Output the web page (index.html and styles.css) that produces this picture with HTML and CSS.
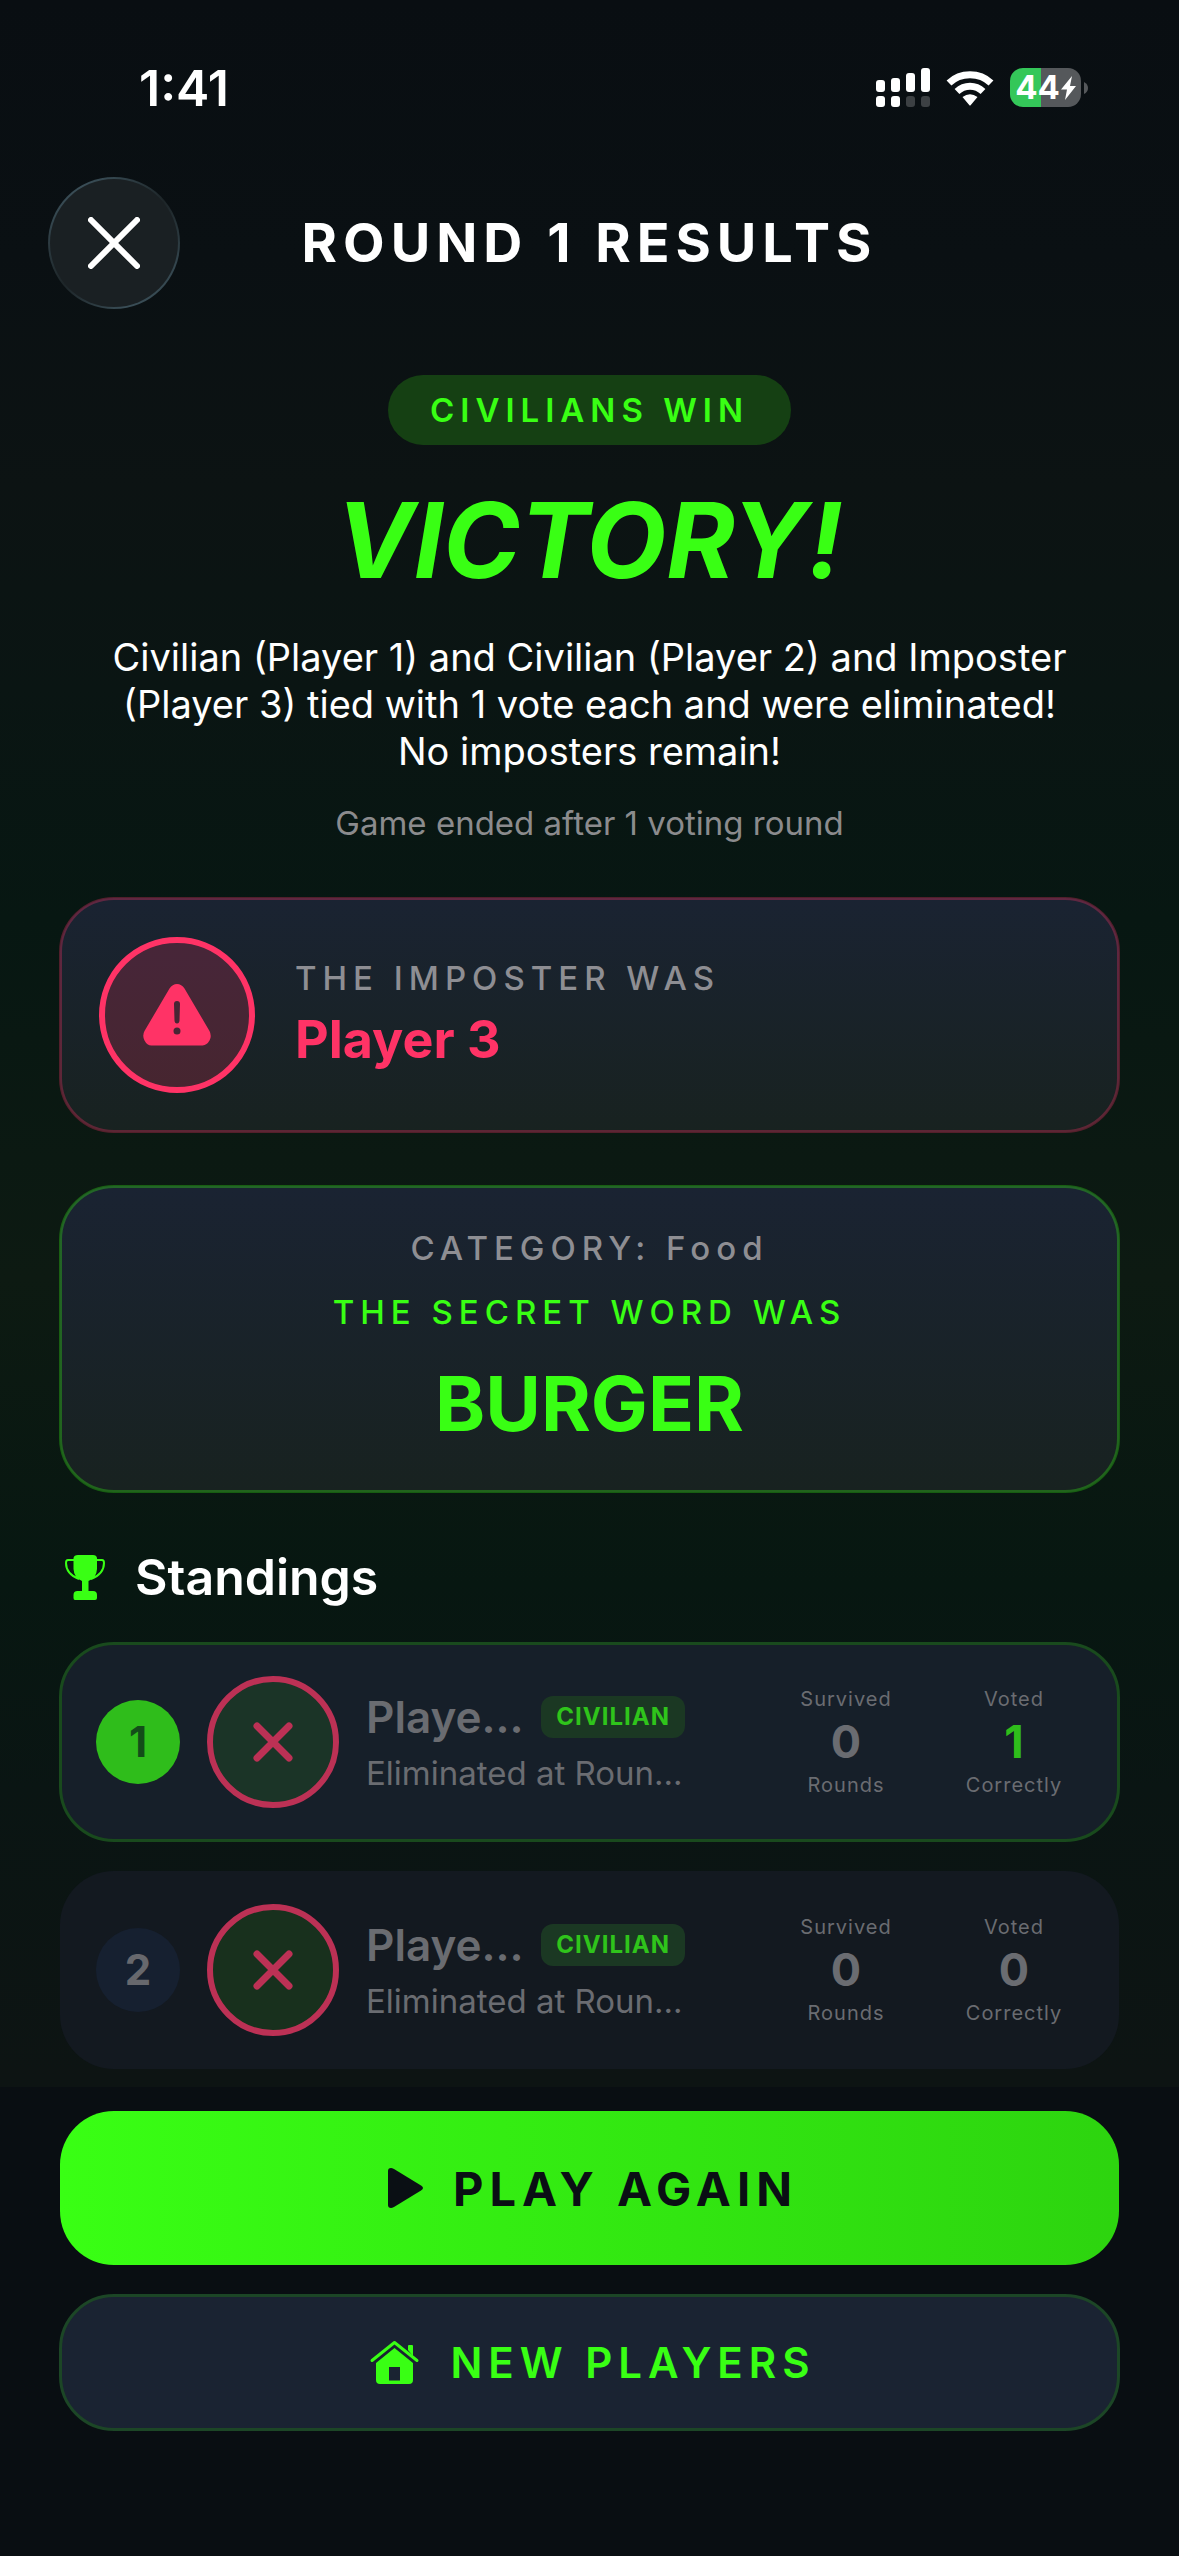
FILE: index.html
```html
<!DOCTYPE html>
<html lang="en">
<head>
<meta charset="utf-8">
<meta name="viewport" content="width=device-width, initial-scale=1">
<title>Round 1 Results</title>
<link rel="stylesheet" href="styles.css">
</head>
<body>
<div class="screen">
  <div class="status">
    <time class="status-time">1:41</time>
    <div class="status-icons">
      <svg class="icon-signal" viewBox="0 0 54 39" aria-hidden="true">
        <g fill="#fff"><rect x="0" y="12" width="9" height="12" rx="3"/><rect x="15" y="10" width="9" height="14" rx="3"/><rect x="30" y="5" width="9" height="19" rx="3"/><rect x="45" y="0" width="9" height="24" rx="3"/><rect x="0" y="28" width="9" height="11" rx="3"/><rect x="15" y="28" width="9" height="11" rx="3"/></g>
        <g fill="#3c4043"><rect x="30" y="28" width="9" height="11" rx="3"/><rect x="45" y="28" width="9" height="11" rx="3"/></g>
      </svg>
      <svg class="icon-wifi" viewBox="0 0 48 36" aria-hidden="true">
        <g fill="none" stroke="#fff" stroke-width="7"><path d="M3 13C14.500 2 33.500 2 45 13"/><path d="M11 21.500C18.500 14.500 29.500 14.500 37 21.500"/></g>
        <path fill="#fff" d="M16.500 27Q24 21.500 31.500 27L24.800 35Q24 36 23.200 35Z"/>
      </svg>
      <div class="battery">
        <div class="battery-body"><span class="battery-level">44</span><svg class="icon-bolt" viewBox="0 0 15 24" aria-hidden="true"><path fill="#fff" d="M11 0L0 13.500H6L4 24L15 10H9Z"/></svg></div>
        <svg class="icon-nub" viewBox="0 0 4 12" aria-hidden="true"><path fill="#55585b" d="M0 0Q4 2 4 6T0 12Z"/></svg>
      </div>
    </div>
  </div>

  <header class="header">
    <button class="close" type="button" aria-label="Close">
      <svg class="icon-close" viewBox="0 0 52 52" aria-hidden="true"><path d="M3 3L49 49M49 3L3 49"/></svg>
    </button>
    <h1 class="title">ROUND 1 RESULTS</h1>
  </header>

  <main class="content">
    <section class="outcome">
      <p class="pill">CIVILIANS WIN</p>
      <h2 class="victory">VICTORY!</h2>
      <p class="summary">Civilian (Player 1) and Civilian (Player 2) and Imposter (Player 3) tied with 1 vote each and were eliminated! No imposters remain!</p>
      <p class="note">Game ended after 1 voting round</p>
    </section>

    <section class="card card-imposter">
      <div class="alert">
        <svg class="icon-alert" viewBox="0 0 68 62" aria-hidden="true"><path fill="#ff3366" fill-rule="evenodd" d="M26.500 4.500Q29.500 0 34 0T41.500 4.500L66.500 47Q69 52 66.500 56.500T59.500 61.500H8.500Q4 61.500 1.500 56.500T1.500 47ZM31 20L31.500 36.500Q31.700 39.500 34 39.500T36.500 36.500L37 20Q37 17 34 17T31 20ZM34 43.500A3.500 3.500 0 1 0 34 50.500A3.500 3.500 0 1 0 34 43.500Z"/></svg>
      </div>
      <div>
        <p class="label">THE IMPOSTER WAS</p>
        <p class="imposter-name">Player 3</p>
      </div>
    </section>

    <section class="card card-word">
      <p class="label">CATEGORY: Food</p>
      <p class="label label-green">THE SECRET WORD WAS</p>
      <p class="word">BURGER</p>
    </section>

    <section class="standings">
      <h2 class="standings-title">
        <svg class="icon-trophy" viewBox="0 0 40 45" aria-hidden="true"><path fill="#39ff14" d="M8.500 3Q9 0 13 0H28Q31.500 0 32 3V14Q31.500 23 23.500 26V36H28Q32 36 32 40V43Q32 45 30 45H10Q8.500 45 8.500 43V40Q8.500 36 12.500 36H17V26Q9 23 8.500 14Z"/><path fill="none" stroke="#39ff14" stroke-width="2" d="M9 5H3Q1 5 1 8Q1 19 14 24M31 5H37Q39 5 39 8Q39 19 26 24"/></svg>
        Standings
      </h2>
      <ol class="rows">
        <li class="row row-first">
          <span class="rank">1</span>
          <span class="avatar"><svg class="icon-out" viewBox="0 0 40 40" aria-hidden="true"><path d="M4 4L36 36M36 4L4 36"/></svg></span>
          <div class="info">
            <div class="name-line"><span class="name">Playe…</span><span class="badge">CIVILIAN</span></div>
            <p class="fate">Eliminated at Roun…</p>
          </div>
          <div class="stats">
            <div class="stat"><span>Survived</span><strong>0</strong><span>Rounds</span></div>
            <div class="stat stat-green"><span>Voted</span><strong>1</strong><span>Correctly</span></div>
          </div>
        </li>
        <li class="row">
          <span class="rank">2</span>
          <span class="avatar"><svg class="icon-out" viewBox="0 0 40 40" aria-hidden="true"><path d="M4 4L36 36M36 4L4 36"/></svg></span>
          <div class="info">
            <div class="name-line"><span class="name">Playe…</span><span class="badge">CIVILIAN</span></div>
            <p class="fate">Eliminated at Roun…</p>
          </div>
          <div class="stats">
            <div class="stat"><span>Survived</span><strong>0</strong><span>Rounds</span></div>
            <div class="stat"><span>Voted</span><strong>0</strong><span>Correctly</span></div>
          </div>
        </li>
      </ol>
    </section>
  </main>

  <footer class="footer">
    <button class="btn btn-play" type="button">
      <svg class="icon-play" viewBox="0 0 48 48" aria-hidden="true"><path fill="#0a0f14" d="M7 7Q7 4 10 4Q11 4 13 5L40 21.500Q44 24 40 26.500L13 43Q11 44 10 44Q7 44 7 41Z"/></svg>
      PLAY AGAIN
    </button>
    <button class="btn btn-new" type="button">
      <svg class="icon-home" viewBox="0 0 63 48" aria-hidden="true"><path fill="none" stroke="#39ff14" stroke-width="3" stroke-linecap="round" stroke-linejoin="round" d="M9 21.500L31.500 3.500L54 21.500"/><path fill="#39ff14" d="M45 11V7Q45 6 46 6H49Q50 6 50 7V17Z"/><path fill="#39ff14" fill-rule="evenodd" d="M31.500 9L50 24V41Q50 45 46 45H17Q13 45 13 41V24ZM26 28V41.500H37V28Z"/></svg>
      NEW PLAYERS
    </button>
  </footer>
</div>
</body>
</html>
```
FILE: styles.css
```css
:root {
  --green: #39ff14;
  --red: #ff3366;
  --grey: #8e8e93;
  --base: #0a0f14;
  --panel: #1a2332;
  --gutter: 60px;
}

* { box-sizing: border-box; }

body, h1, h2, p, ol { margin: 0; padding: 0; }

body {
  background: var(--base);
  color: #fff;
  font-family: Inter, "Liberation Sans", sans-serif;
}

.screen {
  min-height: 100vh;
  display: flex;
  flex-direction: column;
  background: linear-gradient(#090e12 0%, #0a1013 10%, #0c1313 19%, #0a1513 27%, #071712 36%, #0d1a12 50%, #071711 62%, #0a1513 70%, #0d1413 81%);
}

.status {
  height: 177px;
  padding: 60px 91px 0 139px;
  display: flex;
  justify-content: space-between;
  align-items: flex-start;
}

.status-time { font-size: 50px; line-height: 56px; font-weight: 600; }

.status-icons { display: flex; align-items: center; gap: 16px; padding-top: 8px; }
.icon-signal { width: 54px; height: 39px; }
.icon-wifi { width: 48px; height: 36px; }

.battery { display: flex; align-items: center; gap: 3px; }
.battery-body {
  width: 71px;
  height: 39px;
  border-radius: 13px;
  display: flex;
  align-items: center;
  justify-content: center;
  gap: 1px;
  background: linear-gradient(90deg, #34c759 44%, #55585b 44%);
}
.battery-level { font-size: 33px; line-height: 39px; font-weight: 700; }
.icon-bolt { width: 15px; height: 24px; }
.icon-nub { width: 4px; height: 12px; }

.header {
  display: grid;
  grid-template-columns: 132px 1fr 132px;
  align-items: center;
  padding: 0 48px;
}

.close {
  width: 132px;
  height: 132px;
  padding: 0;
  border: 2px solid transparent;
  border-radius: 50%;
  display: grid;
  place-items: center;
  background:
    linear-gradient(#1a2023, #1a2023) padding-box,
    conic-gradient(#34464e, #1d2528 50deg, #34464e 110deg, #3a4e57 170deg, #1d2528 230deg, #34464e 290deg, #3a4e57 330deg, #34464e) border-box;
}
.icon-close { width: 52px; height: 52px; fill: none; stroke: #fff; stroke-width: 6; stroke-linecap: round; }

.title {
  text-align: center;
  font-size: 54px;
  line-height: 64px;
  font-weight: 700;
  letter-spacing: 6px;
}

.content { padding: 66px var(--gutter) 18px; }

.outcome { display: flex; flex-direction: column; align-items: center; text-align: center; }

.pill {
  padding: 0 42px;
  border-radius: 35px;
  background: #154013;
  color: var(--green);
  font-size: 33px;
  line-height: 70px;
  font-weight: 600;
  letter-spacing: 6px;
}

.victory {
  margin-top: 30px;
  color: var(--green);
  font-size: 104px;
  line-height: 130px;
  font-weight: 700;
  font-style: italic;
}

.summary { margin-top: 29px; padding: 0 42px; font-size: 38px; line-height: 47px; }
.note { margin-top: 27px; color: #8b8b8d; font-size: 33px; line-height: 42px; }

.card {
  border-radius: 54px;
  outline: 3px solid;
  outline-offset: -2px;
  background: linear-gradient(#1a2332, #182220);
}

.card-imposter {
  margin-top: 54px;
  padding: 39px;
  display: flex;
  align-items: center;
  gap: 40px;
  outline-color: rgba(255, 51, 102, 0.3);
}

.alert {
  width: 156px;
  height: 156px;
  border: 6px solid var(--red);
  border-radius: 50%;
  display: grid;
  place-items: center;
  background: rgba(255, 51, 102, 0.2);
}
.icon-alert { width: 68px; height: 62px; }

.label {
  color: var(--grey);
  font-size: 33px;
  line-height: 40px;
  font-weight: 500;
  letter-spacing: 6px;
}
.label-green { color: var(--green); }

.imposter-name { color: var(--red); font-size: 52px; line-height: 64px; font-weight: 700; margin-top: 10px; }

.card-word {
  margin-top: 54px;
  padding: 42px 36px;
  display: flex;
  flex-direction: column;
  align-items: center;
  gap: 24px;
  text-align: center;
  outline-color: rgba(57, 255, 20, 0.3);
}
.word { color: var(--green); font-size: 76px; line-height: 94px; font-weight: 700; }

.standings { margin-top: 54px; }
.standings-title {
  display: flex;
  align-items: center;
  gap: 30px;
  padding-left: 5px;
  font-size: 50px;
  line-height: 62px;
  font-weight: 600;
}
.icon-trophy { width: 40px; height: 45px; }

.rows {
  margin-top: 35px;
  display: grid;
  grid-template-columns: minmax(0, 1fr);
  gap: 30px;
  list-style: none;
}

.row {
  min-height: 198px;
  padding: 0 36px;
  display: flex;
  align-items: center;
  gap: 27px;
  border-radius: 54px;
  background: #131920;
}
.row-first { background: #161f29; outline: 3px solid #194a1d; outline-offset: -2px; }

.rank {
  flex: none;
  width: 84px;
  border-radius: 50%;
  background: #162030;
  color: #67686d;
  font-size: 42px;
  line-height: 84px;
  font-weight: 700;
  text-align: center;
}
.row-first .rank { background: #2fbd1b; color: #134d19; }

.avatar {
  flex: none;
  width: 132px;
  height: 132px;
  border: 6px solid #bc3155;
  border-radius: 50%;
  display: grid;
  place-items: center;
  background: #18301d;
}
.row-first .avatar { background: #1b3427; }
.icon-out { width: 40px; height: 40px; fill: none; stroke: #bc3155; stroke-width: 7; stroke-linecap: round; }

.info {
  flex: 1;
  min-width: 0;
  display: grid;
  grid-template-columns: minmax(0, 1fr);
  gap: 8px;
  color: #6a6c71;
}
.name-line { display: flex; align-items: center; gap: 12px; }
.name {
  flex: 1;
  white-space: nowrap;
  font-size: 44px;
  line-height: 54px;
  font-weight: 600;
}
.badge {
  flex: none;
  padding: 0 15px;
  border-radius: 12px;
  background: #1b3823;
  color: #2fc41b;
  font-size: 24px;
  line-height: 42px;
  font-weight: 700;
  letter-spacing: 1px;
}
.fate { white-space: nowrap; font-size: 33px; line-height: 42px; }

.stats { display: grid; grid-template-columns: 138px 138px; gap: 30px; padding-left: 65px; }
.stat {
  display: flex;
  flex-direction: column;
  align-items: center;
  color: #6a6c71;
  font-size: 20px;
  line-height: 26px;
  letter-spacing: 1px;
}
.stat strong { font-size: 45px; line-height: 60px; font-weight: 700; letter-spacing: 0; }
.stat-green strong { color: #2fbd1b; }

.footer {
  flex: 1;
  padding: 24px var(--gutter);
  display: flex;
  flex-direction: column;
  gap: 30px;
  background: #090e12;
}

.btn {
  border: 0;
  border-radius: 54px;
  padding: 0;
  display: flex;
  align-items: center;
  justify-content: center;
  gap: 24px;
  font-family: inherit;
  letter-spacing: 6px;
}
.btn-play {
  height: 154px;
  background: linear-gradient(90deg, #39ff14, #2dd40f);
  color: var(--base);
  font-size: 47px;
  font-weight: 700;
}
.btn-new {
  height: 135px;
  background: var(--panel);
  outline: 3px solid #1c4626;
  outline-offset: -2px;
  color: var(--green);
  font-size: 42px;
  font-weight: 600;
}
.icon-play { width: 48px; height: 48px; }
.icon-home { width: 63px; height: 48px; }
```
